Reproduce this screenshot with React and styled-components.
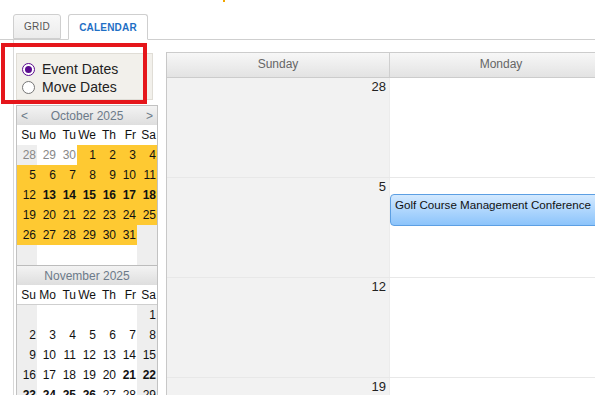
import styled, { createGlobalStyle } from 'styled-components'

const GlobalStyle = createGlobalStyle`
    html, body {
        margin: 0;
        overflow: hidden;
        background: #fff;
        font-family: "Liberation Sans", Arial, sans-serif;
    }
`

const Page = styled.div`
    position: relative;
    width: 595px;
    height: 395px;
    overflow: hidden;
`
const TopStrip = styled.div`
    height: 14px;
`
const Mark = styled.span`
    display: block;
    margin-left: 223px;
    width: 2px;
    height: 2px;
    background: #f0a500;
`
const TabBar = styled.div`
    display: flex;
    align-items: flex-end;
    gap: 7px;
    height: 25px;
    padding-left: 13px;
    border-bottom: 1px solid #cfcfcf;
`
const Tab = styled.div`
    display: flex;
    align-items: center;
    justify-content: center;
    box-sizing: border-box;
    width: ${p => (p.$active ? '80px' : '48px')};
    height: ${p => (p.$active ? '26px' : '25px')};
    margin-bottom: ${p => (p.$active ? '-1px' : '0')};
    border: 1px solid #cfcfcf;
    border-bottom: ${p => (p.$active ? '1px solid #fff' : '1px solid #cfcfcf')};
    border-radius: 3px 3px 0 0;
    background: ${p => (p.$active ? '#fff' : 'linear-gradient(#f8f8f8, #ececec)')};
    color: ${p => (p.$active ? '#1f6fc5' : '#555')};
    font-size: 10px;
    font-weight: ${p => (p.$active ? 'bold' : 'normal')};
    letter-spacing: 0.2px;
`
const Content = styled.div`
    display: flex;
    gap: 8px;
    margin-left: 13px;
    padding-left: 2px;
    border-left: 1px solid #d8d8d8;
`
const Sidebar = styled.div`
    display: flex;
    flex-direction: column;
    width: 142px;
    padding-top: 13px;
`
const ModePanel = styled.div`
    box-sizing: border-box;
    width: 137px;
    height: 47px;
    padding: 6px 0 0 5px;
    background: #f2f0eb;
    border: 1px solid #e0ddd6;
    margin-bottom: 5px;
`
const RadioRow = styled.label`
    display: flex;
    align-items: center;
    gap: 7px;
    height: 18px;
    font-size: 14px;
    color: #222;
`
const Radio = styled.span`
    box-sizing: border-box;
    width: 13px;
    height: 13px;
    border-radius: 50%;
    border: ${p => (p.$checked ? '1.5px solid #5b0b8f' : '1px solid #767676')};
    background: #fff;
    display: flex;
    align-items: center;
    justify-content: center;

    &::after {
        content: '';
        width: 7px;
        height: 7px;
        border-radius: 50%;
        background: ${p => (p.$checked ? '#5b0b8f' : 'transparent')};
    }
`
const Annotation = styled.div`
    position: absolute;
    left: 1px;
    top: 43px;
    width: 146px;
    height: 61px;
    box-sizing: border-box;
    border: 4px solid #e5161b;
    pointer-events: none;
`
const MiniCal = styled.div`
    border: 1px solid #c2c2c2;
    border-top: ${p => (p.$joined ? 'none' : '1px solid #c2c2c2')};
    border-bottom: none;
    font-size: 12px;
`
const MiniHead = styled.div`
    display: flex;
    align-items: center;
    justify-content: space-between;
    height: 19px;
    padding: 0 4px;
    background: linear-gradient(#f3f3f3, #dedede);
    border-top: ${p => (p.$joined ? '1px solid #bcbcbc' : 'none')};
    color: #6c7a89;
    font-size: 12px;
`
const HeadTitle = styled.span`
    flex: 1;
    text-align: center;
`
const MiniGrid = styled.div`
    display: grid;
    grid-template-columns: repeat(7, 20px);
    grid-auto-rows: 20px;
`
const DayName = styled.div`
    display: flex;
    align-items: center;
    justify-content: flex-end;
    padding-right: 1px;
    background: #fff;
    color: #111;
    border-bottom: ${p => (p.$line ? '1px solid #cfcfcf' : 'none')};
`
const DayCell = styled.div`
    display: flex;
    align-items: center;
    justify-content: flex-end;
    padding-right: 1px;
    background: ${p => (p.$event ? '#fec932' : p.$weekend ? '#eeeeee' : '#fff')};
    color: ${p => (p.$other ? '#888' : '#111')};
    font-weight: ${p => (p.$bold ? 'bold' : 'normal')};
`
const Main = styled.div`
    margin-top: 12px;
    border-left: 1px solid #c8c8c8;
    flex: 1;
    overflow: hidden;
`
const HeadRow = styled.div`
    display: grid;
    grid-template-columns: repeat(7, 223px);
    height: 24px;
    border-top: 1px solid #cccccc;
    border-bottom: 1px solid #cccccc;
    background: linear-gradient(#f7f7f7, #e3e3e3);
`
const HeadCell = styled.div`
    display: flex;
    align-items: center;
    justify-content: center;
    padding-bottom: 3px;
    border-right: 1px solid #cfcfcf;
    color: #666;
    font-size: 12px;
`
const WeekRow = styled.div`
    display: grid;
    grid-template-columns: repeat(7, 223px);
    grid-template-rows: 16px 32px 1fr;
    height: 99px;
    border-bottom: 1px solid #e8e8e8;
`
const DayBox = styled.div`
    grid-row: 1 / -1;
    grid-column: ${p => p.$col};
    background: ${p => (p.$weekend ? '#f2f2f2' : '#fff')};
    border-right: 1px solid #ececec;
    text-align: right;
    padding: 1px 3px 0 0;
    font-size: 13px;
    color: #222;
`
const EventBar = styled.div`
    grid-row: 2;
    grid-column: ${p => p.$from} / span ${p => p.$span};
    z-index: 1;
    box-sizing: border-box;
    padding: 3px 0 0 4px;
    background: linear-gradient(#d3e9ff, #8cc4fb);
    border: 1px solid #5c9fe3;
    border-radius: 4px;
    font-size: 11.6px;
    color: #111;
    white-space: nowrap;
`

const dayNames = ['Su', 'Mo', 'Tu', 'We', 'Th', 'Fr', 'Sa']
const weekDays = ['Sunday', 'Monday', 'Tuesday', 'Wednesday', 'Thursday', 'Friday', 'Saturday']

// each cell: [label, flags] — e: event day, b: bold, o: other month
const october = [
    ['28', 'o'], ['29', 'o'], ['30', 'o'], ['1', 'e'], ['2', 'e'], ['3', 'e'], ['4', 'e'],
    ['5', 'e'], ['6', 'e'], ['7', 'e'], ['8', 'e'], ['9', 'e'], ['10', 'e'], ['11', 'e'],
    ['12', 'e'], ['13', 'eb'], ['14', 'eb'], ['15', 'eb'], ['16', 'eb'], ['17', 'eb'], ['18', 'eb'],
    ['19', 'e'], ['20', 'e'], ['21', 'e'], ['22', 'e'], ['23', 'e'], ['24', 'e'], ['25', 'e'],
    ['26', 'e'], ['27', 'e'], ['28', 'e'], ['29', 'e'], ['30', 'e'], ['31', 'e'], ['', ''],
    ['', ''], ['', ''], ['', ''], ['', ''], ['', ''], ['', ''], ['', ''],
]
const november = [
    ['', ''], ['', ''], ['', ''], ['', ''], ['', ''], ['', ''], ['1', ''],
    ['2', ''], ['3', ''], ['4', ''], ['5', ''], ['6', ''], ['7', ''], ['8', ''],
    ['9', ''], ['10', ''], ['11', ''], ['12', ''], ['13', ''], ['14', ''], ['15', ''],
    ['16', ''], ['17', ''], ['18', ''], ['19', ''], ['20', ''], ['21', 'b'], ['22', 'b'],
    ['23', 'b'], ['24', 'b'], ['25', 'b'], ['26', 'b'], ['27', ''], ['28', ''], ['29', ''],
]

const weeks = [
    ['28', '', '', '', '', '', ''],
    ['5', '', '', '', '', '', ''],
    ['12', '', '', '', '', '', ''],
    ['19', '', '', '', '', '', ''],
]

function MonthBlock({ title, days, arrows, joined }) {
    return (
        <MiniCal $joined={joined}>
            <MiniHead $joined={joined}>
                <span>{arrows ? '<' : ''}</span>
                <HeadTitle>{title}</HeadTitle>
                <span>{arrows ? '>' : ''}</span>
            </MiniHead>
            <MiniGrid>
                {dayNames.map(d => (
                    <DayName key={d} $line={joined}>{d}</DayName>
                ))}
                {days.map(([label, flags], i) => {
                    const col = i % 7
                    return (
                        <DayCell
                            key={i}
                            $weekend={col === 0 || col === 6}
                            $event={flags.includes('e')}
                            $bold={flags.includes('b')}
                            $other={flags.includes('o')}
                        >
                            {label}
                        </DayCell>
                    )
                })}
            </MiniGrid>
        </MiniCal>
    )
}

function App() {
    return (
        <Page>
            <GlobalStyle />
            <TopStrip>
                <Mark />
            </TopStrip>
            <TabBar>
                <Tab>GRID</Tab>
                <Tab $active>CALENDAR</Tab>
            </TabBar>
            <Content>
                <Sidebar>
                    <ModePanel>
                        <RadioRow>
                            <Radio $checked />
                            Event Dates
                        </RadioRow>
                        <RadioRow>
                            <Radio />
                            Move Dates
                        </RadioRow>
                    </ModePanel>
                    <MonthBlock title="October 2025" days={october} arrows />
                    <MonthBlock title="November 2025" days={november} joined />
                </Sidebar>
                <Main>
                    <HeadRow>
                        {weekDays.map(d => (
                            <HeadCell key={d}>{d}</HeadCell>
                        ))}
                    </HeadRow>
                    {weeks.map((week, w) => (
                        <WeekRow key={w}>
                            {week.map((n, i) => (
                                <DayBox key={i} $col={i + 1} $weekend={i === 0 || i === 6}>
                                    {n}
                                </DayBox>
                            ))}
                            {w === 1 && (
                                <EventBar $from={2} $span={5}>
                                    Golf Course Management Conference
                                </EventBar>
                            )}
                        </WeekRow>
                    ))}
                </Main>
            </Content>
            <Annotation />
        </Page>
    )
}

export default App
